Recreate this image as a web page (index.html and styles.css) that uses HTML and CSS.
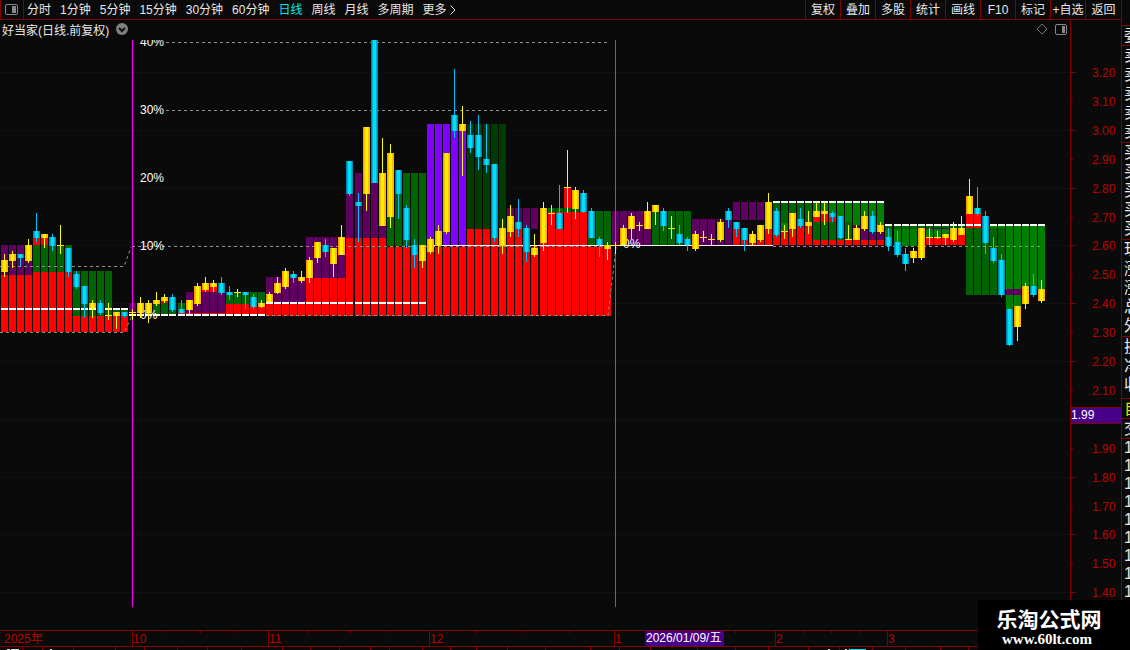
FILE: index.html
```html
<!DOCTYPE html>
<html lang="zh-CN">
<head>
    <meta charset="UTF-8">
    <meta name="viewport" content="width=device-width, initial-scale=1.0">
    <title>好当家 日线</title>
    <link rel="stylesheet" href="styles.css">
</head>
<body>
    <div class="main">
        <header class="toolbar">
            <button class="layout-btn" aria-label="布局">
                <svg width="13" height="11" viewBox="0 0 13 11">
                    <rect x="0.5" y="0.5" width="12" height="10" rx="1.5" fill="none" stroke="#888"/>
                    <rect x="7" y="2" width="4" height="7" fill="#888"/>
                </svg>
            </button>
            <nav class="periods">
                <button>分时</button>
                <button>1分钟</button>
                <button>5分钟</button>
                <button>15分钟</button>
                <button>30分钟</button>
                <button>60分钟</button>
                <button class="active">日线</button>
                <button>周线</button>
                <button>月线</button>
                <button>多周期</button>
                <button class="more">更多
                    <svg width="6" height="10" viewBox="0 0 6 10"><path d="M0.5 0.5 L5 5 L0.5 9.5" fill="none" stroke="#e0e0e0"/></svg>
                </button>
            </nav>
            <div class="tools">
                <button>复权</button>
                <button>叠加</button>
                <button>多股</button>
                <button>统计</button>
                <button>画线</button>
                <button>F10</button>
                <button>标记</button>
                <button>+自选</button>
                <button>返回</button>
            </div>
        </header>

        <div class="chart-row">
            <div class="chart">
                <div class="chart-title">
                    <span>好当家(日线.前复权)</span>
                    <button aria-label="展开">
                        <svg width="12" height="12" viewBox="0 0 12 12">
                            <circle cx="6" cy="6" r="6" fill="#808080"/>
                            <path d="M3 5 L6 8 L9 5" fill="none" stroke="#111" stroke-width="2"/>
                        </svg>
                    </button>
                    <div class="chart-icons">
                        <svg width="12" height="12" viewBox="0 0 12 12"><path d="M6 1 L11 6 L6 11 L1 6 Z" fill="none" stroke="#777"/></svg>
                        <svg width="12" height="11" viewBox="0 0 12 11">
                            <rect x="0.5" y="0.5" width="11" height="10" rx="1.5" fill="none" stroke="#888"/>
                            <rect x="7" y="2" width="3" height="7" fill="#888"/>
                        </svg>
                    </div>
                </div>
                <svg id="candles" viewBox="0 40 1070 590" preserveAspectRatio="xMinYMin meet"></svg>
            </div>
            <svg id="priceAxis" viewBox="0 20 51 610" preserveAspectRatio="xMinYMin meet"></svg>
        </div>

        <svg id="timeAxis" viewBox="0 630 1121 20" preserveAspectRatio="xMinYMin meet"></svg>
    </div>

    <aside class="quotes">
        <div class="group head"><span>委</span></div>
        <div class="group"><span>卖</span><span>卖</span><span>卖</span><span>卖</span><span>卖</span></div>
        <div class="group"><span>买</span><span>买</span><span>买</span><span>买</span><span>买</span></div>
        <div class="group"><span>现</span><span>涨</span><span>涨</span><span>总</span><span>外</span></div>
        <div class="group rates"><span>换</span><span>净</span><span>收</span></div>
        <div class="group own"><span>自</span></div>
        <div class="group deal"><span>交</span></div>
        <div class="group trades">
            <span>1</span><span>1</span><span>1</span><span>1</span><span>1</span><span>1</span><span>1</span><span>1</span><span>1</span>
        </div>
    </aside>

    <div class="site-mark">
        <strong>乐淘公式网</strong>
        <a href="#">www.60lt.com</a>
    </div>

    <script src="chart.js"></script>
</body>
</html>
```

FILE: styles.css
```css
* {
    box-sizing: border-box;
}

body {
    margin: 0;
    height: 100vh;
    display: flex;
    overflow: hidden;
    background-color: #0a0a0a;
    color: #e8e8e8;
    font-family: "Liberation Sans", "Noto Sans CJK SC", sans-serif;
    font-size: 12px;
}

button {
    margin: 0;
    padding: 0;
    border: none;
    background: none;
    color: inherit;
    font: inherit;
    white-space: nowrap;
    cursor: pointer;
}

svg {
    display: block;
    flex-shrink: 0;
}

.main {
    flex: 1;
    min-width: 0;
    display: flex;
    flex-direction: column;
}

/* Toolbar */
.toolbar {
    display: flex;
    height: 20px;
    border-bottom: 1px solid #800000;
    line-height: 18px;
}

.layout-btn {
    width: 24px;
    padding-left: 4px;
    border-left: 1px solid #800000;
    border-right: 1px solid #800000;
}

.periods {
    flex: 1;
    display: flex;
    gap: 9px;
    padding-left: 3px;
}

.periods .active {
    color: #00e8e8;
}

.periods .more {
    display: flex;
    align-items: center;
    gap: 3px;
}

.tools {
    display: flex;
}

.tools button {
    width: 35px;
    border-left: 1px solid #800000;
    text-align: center;
}

.tools button:last-child {
    width: 36px;
}

/* Chart */
.chart-row {
    flex: 1;
    min-height: 0;
    display: flex;
}

.chart {
    flex: 1;
    min-width: 0;
}

.chart-title {
    display: flex;
    align-items: center;
    gap: 7px;
    height: 20px;
    padding: 0 3px 2px 2px;
}

.chart-icons {
    display: flex;
    align-items: center;
    gap: 7px;
    margin-left: auto;
}

#candles {
    width: 100%;
    height: auto;
}

#priceAxis {
    width: 51px;
    height: 610px;
}

#timeAxis {
    width: 100%;
    height: auto;
}

.pct {
    fill: #ffffff;
}

.price,
.month {
    fill: #c00000;
}

.cursor-text {
    fill: #ffffff;
}

/* Quote panel, only its left edge fits in the window */
.quotes {
    width: 9px;
    overflow: hidden;
    border-left: 1px solid #800000;
    font-size: 16px;
}

.group {
    display: flex;
    flex-direction: column;
    width: 40px;
    padding: 0 0 1px 2px;
    border-bottom: 1px solid #800000;
}

.group span {
    height: 19px;
    line-height: 19px;
}

.group.head {
    margin-top: 25px;
    padding-bottom: 0;
    border-top: 1px solid #800000;
}

.group.rates {
    padding-bottom: 4px;
}

.group.own {
    padding-bottom: 0;
    color: #e0e000;
}

.group.deal {
    padding-bottom: 0;
}

.group.trades {
    border-bottom: none;
}

.group.trades span {
    height: 18px;
    line-height: 18px;
}

.site-mark {
    position: absolute;
    right: 0;
    bottom: 0;
    width: 152px;
    height: 50px;
    padding: 6px 10px 0 0;
    background-color: #000;
    color: #fff;
    text-align: center;
}

.site-mark strong {
    display: block;
    font-family: "Noto Sans CJK SC", sans-serif;
    font-size: 21px;
    line-height: 25px;
}

.site-mark a {
    display: block;
    padding-right: 4px;
    color: #fff;
    font-family: "Liberation Serif", serif;
    font-size: 15px;
    font-weight: bold;
    line-height: 16px;
    text-decoration: none;
}
```

FILE: chart.js
```js
const NS = 'http://www.w3.org/2000/svg';

const COLORS = {
    red: '#ff0000',
    purple: '#600060',
    violet: '#8000ff',
    dark: '#003c00',
    green: '#006400',
    mid: '#008000',
    white: '#ffffff'
};

// [type, body top, body bottom, high, low], y = up day, c = down day
const candles = [
    ['y',260,272,254,277], ['y',254,261,251,268], ['c',254,258,254,266], ['y',245,261,239,263], ['c',231,238,213,242],
    ['y',234,238,234,248], ['c',237,246,234,251], ['y',245,246,225,254], ['c',248,272,248,277], ['c',274,287,271,289],
    ['c',286,304,286,318], ['y',303,308,300,318], ['c',303,313,300,315], ['y',315,316,303,320], ['y',312,316,312,329],
    ['c',312,316,312,318], ['y',312,313,309,320], ['y',303,313,297,318], ['y',303,313,300,323], ['y',300,304,292,306],
    ['y',297,301,294,303], ['c',297,310,294,312], ['c',309,313,300,314], ['y',300,310,300,314], ['y',286,304,283,306],
    ['y',283,290,277,292], ['y',283,287,280,292], ['c',283,293,277,295], ['c',292,295,286,300], ['y',292,293,289,297],
    ['c',292,295,292,309], ['c',297,307,294,309], ['y',303,307,300,308], ['y',294,302,292,303], ['y',283,293,277,294],
    ['y',271,287,268,289], ['c',274,278,271,283], ['y',277,281,271,283], ['y',260,278,257,283], ['y',242,258,242,263],
    ['c',245,252,239,257], ['y',248,264,248,277], ['y',237,255,225,255], ['c',161,194,161,196], ['c',202,206,193,242],
    ['y',127,194,127,211], ['c',40,183,40,183], ['y',173,226,138,226], ['y',153,217,144,228], ['c',170,194,170,219],
    ['c',208,240,205,248], ['c',245,255,239,268], ['y',245,261,245,268], ['y',239,252,237,254], ['y',231,246,225,254],
    ['y',153,232,153,234], ['c',115,131,69,138], ['y',124,131,106,176], ['c',135,148,121,153], ['c',135,157,115,170],
    ['c',159,165,124,173], ['c',164,238,164,242], ['y',228,246,219,254], ['y',216,232,205,237], ['c',222,229,199,237],
    ['c',228,252,225,262], ['y',248,255,234,257], ['y',208,243,202,251], ['y',213,214,205,225], ['c',213,229,185,229],
    ['y',187,188,150,213], ['y',190,209,187,219], ['c',193,212,190,213], ['c',211,238,208,238], ['c',239,245,237,257],
    ['y',245,249,242,260], ['y',245,246,242,254], ['y',228,245,225,246], ['y',216,229,213,239], ['y',225,226,222,231],
    ['y',211,229,202,229], ['y',205,212,205,225], ['c',211,226,208,231], ['y',228,229,216,239], ['c',234,243,225,245],
    ['c',239,245,237,251], ['y',234,249,231,251], ['y',237,238,231,242], ['y',239,240,234,245], ['y',222,240,219,242],
    ['c',211,220,208,228], ['c',222,229,222,237], ['c',228,240,228,251], ['y',234,243,231,245], ['y',225,240,225,242],
    ['y',202,229,193,234], ['c',211,235,208,237], ['y',231,232,225,239], ['y',213,229,213,237], ['c',219,226,208,228],
    ['y',222,226,211,234], ['y',211,217,203,217], ['y',211,214,203,225], ['c',213,217,211,222], ['c',216,238,216,239],
    ['y',239,240,225,240], ['y',228,240,225,240], ['y',216,229,211,231], ['c',216,232,211,234], ['y',225,232,222,234],
    ['c',237,246,228,251], ['c',242,255,231,257], ['c',254,264,248,271], ['y',251,258,248,263], ['y',228,258,228,260],
    ['y',237,238,228,245], ['y',237,238,231,239], ['y',234,238,234,245], ['y',228,240,222,242], ['y',228,235,216,235],
    ['y',196,214,179,214], ['c',208,214,187,216], ['c',216,243,211,254], ['c',248,261,237,263], ['c',260,295,254,297],
    ['c',309,345,309,346], ['y',306,327,306,341], ['y',286,304,283,309], ['c',286,295,274,297], ['y',289,301,280,303]
];

// Background columns: [color, first bar, last bar, top, bottom]
const zones = [
    ['purple',0,3,245,275], ['red',0,3,275,332], ['red',4,5,236,245], ['green',4,8,245,272], ['red',4,8,272,332],
    ['green',6,6,240,246], ['green',9,13,271,316], ['green',14,15,310,316], ['red',9,15,316,332],
    ['purple',16,18,303,314], ['green',19,22,303,314], ['red',20,20,300,303], ['purple',23,27,292,313],
    ['red',22,27,313,314], ['red',25,26,286,292], ['green',28,32,292,304], ['red',28,32,304,314],
    ['purple',33,37,277,302], ['red',33,37,304,316], ['purple',38,42,237,278], ['red',38,42,278,316],
    ['purple',43,47,173,238], ['red',43,47,238,316], ['green',48,52,173,246], ['red',48,57,247,316],
    ['violet',53,57,124,245], ['dark',58,62,124,229], ['red',58,62,229,316],
    ['purple',63,66,208,229], ['red',63,65,229,316], ['red',66,66,247,316],
    ['red',70,70,188,208], ['green',67,71,208,212], ['red',67,72,212,316],
    ['green',73,75,211,246], ['red',73,75,247,316], ['purple',76,80,211,245], ['green',81,85,211,245],
    ['purple',86,90,219,245], ['purple',91,94,202,220], ['red',91,91,229,245], ['red',92,92,240,245],
    ['red',93,94,240,245], ['red',95,95,229,245],
    ['green',96,100,203,223], ['mid',96,100,223,235], ['red',96,96,235,245], ['red',97,97,232,245],
    ['red',98,98,229,245], ['red',99,100,226,245],
    ['mid',101,109,203,222], ['green',101,105,222,240], ['red',101,103,214,222], ['mid',106,109,222,225],
    ['purple',106,109,225,240], ['red',101,109,240,245],
    ['green',110,114,226,229], ['mid',110,114,229,246], ['green',115,119,226,228], ['mid',115,119,228,238],
    ['purple',115,117,228,229], ['red',115,119,238,245], ['red',119,119,235,238],
    ['red',120,121,214,228], ['mid',122,124,226,228], ['green',120,124,228,295],
    ['mid',125,129,226,295], ['mid',125,126,295,309], ['purple',125,126,289,295],
    ['white',0,15,308,310], ['white',16,32,314,316], ['white',33,52,302,304],
    ['white',96,109,201,203], ['white',110,129,224,226]
];

// Dashed level lines
const levels = [
    'M0 266.5 H124 L131 247', 'M0 332.5 H124 L132 316',
    'M166 42.5 H608', 'M166 110.5 H608',
    'M132 246.5 H612', 'M266 315.5 H608 L616 247', 'M773 246.5 H1041'
];

const percents = [['40%',140,46], ['30%',140,114], ['20%',140,182], ['10%',140,250], ['0%',140,319], ['0%',623,248]];

const months = [['2025年',0], ['10',132], ['11',268], ['12',429], ['1',614], ['2',775], ['3',887]];
const weekTicks = [165, 200, 234, 308, 350, 389, 476, 522, 569, 735, 803, 831, 859];
const lowerTicks = [22, 42, 73, 115, 144, 177, 207, 241, 282, 310, 339, 370, 389, 422, 450, 476, 507, 545, 590, 619, 650, 697, 735, 768, 808, 839, 872, 905, 940, 968];

function add(parent, tag, attrs, text) {
    const el = document.createElementNS(NS, tag);
    for (const key in attrs) {
        el.setAttribute(key, attrs[key]);
    }
    if (text) {
        el.textContent = text;
    }
    parent.appendChild(el);
    return el;
}

function rect(parent, x, y, width, height, fill) {
    add(parent, 'rect', { x, y, width, height, fill });
}

// Left edge of a bar, the pitch is a little over 8px
function barX(i) {
    return 1 + 8 * i + Math.floor((i + 0.5) / 22.2);
}

function drawCandle(svg, candle, i) {
    const [type, top, bottom, high, low] = candle;
    const x = barX(i);
    const shades = type === 'y'
        ? ['#ff9c00', '#ffc000', '#fff000', '#ffb400']
        : ['#0080b0', '#00b0d8', '#00e0f4', '#0088b8'];
    rect(svg, x + 3, high, 1, low - high, type === 'y' ? '#ffff00' : '#00c0ff');
    if (bottom - top <= 1) {
        rect(svg, x, top, 7, 1, '#ffe800');
        return;
    }
    rect(svg, x, top, 7, bottom - top, shades[0]);
    rect(svg, x + 1, top, 5, bottom - top, shades[1]);
    rect(svg, x + 2, top, 3, bottom - top, shades[2]);
    rect(svg, x + 6, top, 1, bottom - top, shades[3]);
}

function drawChart() {
    const svg = document.getElementById('candles');

    for (let n = 0; n < 10; n++) {
        const y = Math.round(72 + n * 57.8) + 0.5;
        add(svg, 'path', { d: `M1 ${y} H1070`, stroke: '#5c0c0c', 'stroke-dasharray': '1 3' });
    }
    zones.forEach(([color, from, to, top, bottom]) => {
        for (let i = from; i <= to; i++) {
            rect(svg, barX(i), top, 7, bottom - top, COLORS[color]);
        }
    });
    levels.forEach(d => {
        add(svg, 'path', { d, fill: 'none', stroke: '#909090', 'stroke-dasharray': '3 3' });
    });
    rect(svg, barX(53), 245, barX(96) - barX(53), 1, '#ffffff');
    rect(svg, 132, 40, 1, 567, '#ff00ff');
    rect(svg, 615, 40, 1, 567, '#ff00ff');
    percents.forEach(([text, x, y]) => add(svg, 'text', { x, y, class: 'pct' }, text));
    candles.forEach((candle, i) => drawCandle(svg, candle, i));
}

function drawPriceAxis() {
    const svg = document.getElementById('priceAxis');
    rect(svg, 0, 20, 1, 610, '#800000');
    for (let n = 0; n < 19; n++) {
        const y = Math.round(72 + n * 28.9);
        rect(svg, 0, y, n % 2 ? 3 : 6, 1, '#800000');
        if (n !== 12) {
            add(svg, 'text', { x: 22, y: y + 5, class: 'price' }, (3.2 - n * 0.1).toFixed(2));
        }
    }
    rect(svg, 1, 407, 50, 17, '#800000');
    rect(svg, 1, 408, 50, 15, '#480088');
    add(svg, 'text', { x: 1, y: 419, class: 'cursor-text' }, '1.99');
}

function drawTimeAxis() {
    const svg = document.getElementById('timeAxis');
    rect(svg, 0, 630, 1121, 1, '#800000');
    rect(svg, 0, 646, 1121, 1, '#800000');
    weekTicks.forEach(x => rect(svg, x, 631, 1, 2, '#800000'));
    lowerTicks.forEach(x => rect(svg, x, 647, 1, 3, '#800000'));
    months.forEach(([text, x]) => {
        if (x) {
            rect(svg, x, 631, 1, 15, '#800000');
        }
        add(svg, 'text', { x: x ? x + 1 : 4, y: 643, class: 'month' }, text);
    });
    rect(svg, 645, 631, 79, 15, '#480088');
    add(svg, 'text', { x: 646, y: 642, class: 'cursor-text' }, '2026/01/09/五');
    rect(svg, 7, 649, 3, 1, '#e0e0e0');
    rect(svg, 11, 649, 8, 1, '#e0e0e0');
    rect(svg, 50, 649, 2, 1, '#e0e0e0');
    rect(svg, 828, 649, 2, 1, '#e0e0e0');
    rect(svg, 845, 649, 2, 1, '#e0e0e0');
    rect(svg, 849, 649, 17, 1, '#00e0e0');
}

drawChart();
drawPriceAxis();
drawTimeAxis();
```
